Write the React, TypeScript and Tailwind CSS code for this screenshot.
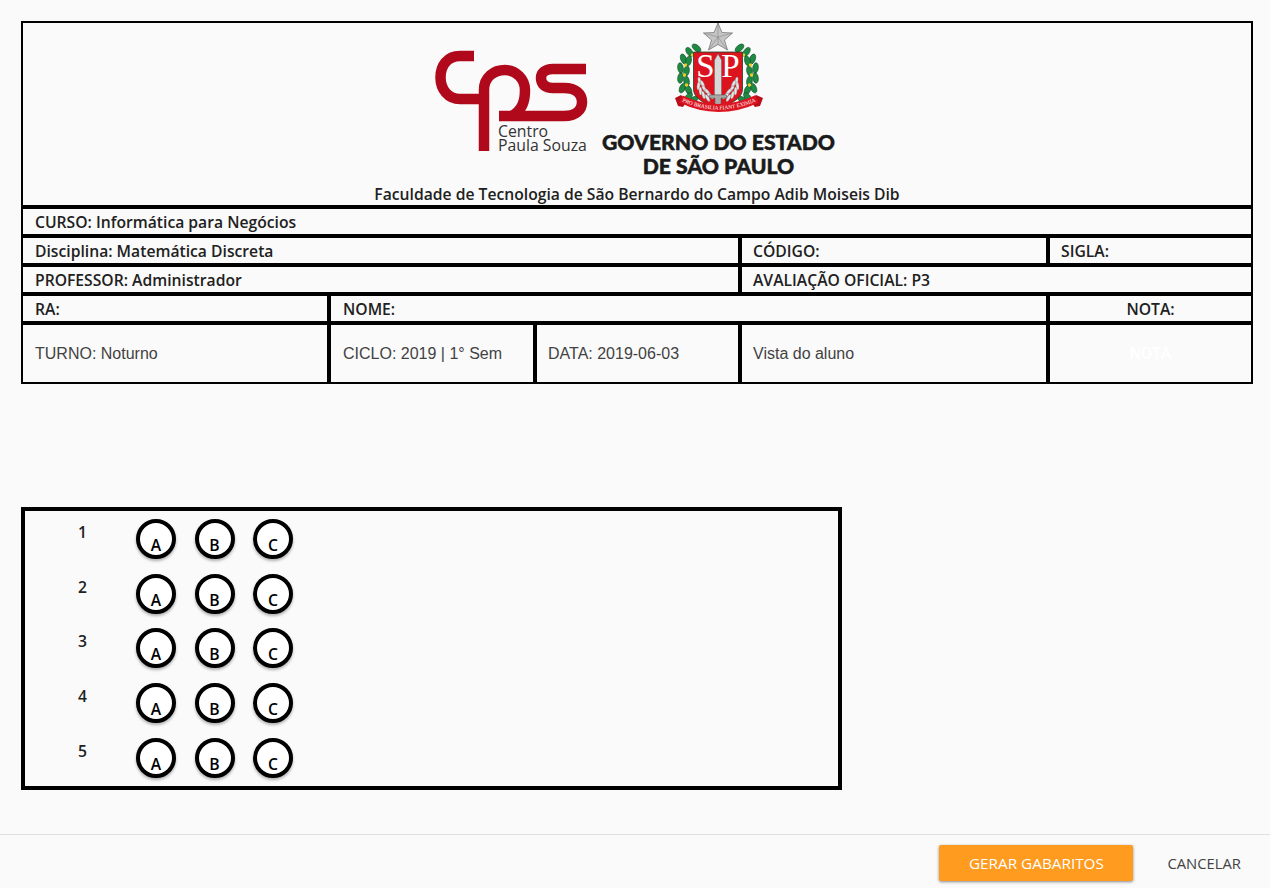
const FONT_BOLD = "font-['Open_Sans',sans-serif] font-semibold text-[15.7px] text-[#212121]";

function CpsLogo() {
  return (
    <svg width="156" height="104" viewBox="0 0 156 104" className="block">
      <g fill="none" stroke="#b0091c" strokeWidth="10.500">
        <path d="M40 6 H26 C13 6 6.500 16 6.500 27.500 C6.500 39 14 49 26 49 H46" />
        <path d="M50 101 V40 C50 27 60 20 71 20 C82 20 91 29 91 40 C91 52 88 60 78 66" />
        <path d="M152 19 H119 C111 19 107 23 107 28 C107 34 111 38 119 38 H130 C142 38 148 44 148 52 C148 60 142 66 130 66 H65" />
      </g>
    </svg>
  );
}

// folhas da coroa: x, y, rotacao
const LEAVES: [number, number, number][] = [
  [21, 25, -50],
  [14, 29, -35],
  [8, 36, -20],
  [13, 38, 15],
  [5, 45, -8],
  [11, 48, 10],
  [5, 55, 8],
  [11, 58, -10],
  [7, 65, 25],
  [13, 67, -25],
  [13, 74, 40],
  [18, 77, 55],
];

const FRUITS: [number, number][] = [
  [17, 32],
  [10, 42],
  [9, 52],
  [11, 62],
];

const SPRAY: [number, number, number][] = [
  [24, 58, -10],
  [27, 61, -25],
  [23, 63, 5],
  [29, 66, -35],
  [25, 68, -5],
  [32, 69, -40],
  [28, 72, -15],
  [35, 73, -50],
  [32, 75, -30],
];

function Crest() {
  return (
    <svg width="88" height="90" viewBox="0 0 88 90" className="block">
      <defs>
        <path id="lema" d="M6 78 Q 43 95 82 78" />
      </defs>
      <g transform="translate(0.500 0)">
        {[0, 1].map((side) => (
          <g key={side} transform={side ? "translate(85 0) scale(-1 1)" : undefined}>
            {LEAVES.map(([x, y, r], i) => (
              <ellipse key={i} cx={x} cy={y} rx="2.800" ry="5.200" transform={`rotate(${r} ${x} ${y})`} fill="#1f8a43" stroke="#0f4a26" strokeWidth="0.600" />
            ))}
            {FRUITS.map(([x, y], i) => (
              <circle key={i} cx={x} cy={y} r="1.700" fill="#f0c92c" />
            ))}
          </g>
        ))}
        <path d="M42.500 0 L46.500 9.500 L57 10 L49 17 L52 27 L42.500 21.500 L33 27 L36 17 L28 10 L38.500 9.500 Z" fill="#c4c4c4" stroke="#6b6b6b" strokeWidth="0.700" />
        <path d="M42.500 0 V21.500 M28 10 L42.500 14 L57 10 M33 27 L42.500 14 L52 27" fill="none" stroke="#7d7d7d" strokeWidth="0.500" />
        <path d="M18 29 H67 V66 C67 77 52 81 42.500 88 C33 81 18 77 18 66 Z" fill="#dc1420" stroke="#0f4a26" strokeWidth="0.800" />
        <text x="30" y="54" textAnchor="middle" fontFamily="Liberation Serif, serif" fontSize="33" fill="#fff">S</text>
        <text x="55" y="54" textAnchor="middle" fontFamily="Liberation Serif, serif" fontSize="33" fill="#fff">P</text>
        {[0, 1].map((side) => (
          <g key={side} transform={side ? "translate(85 0) scale(-1 1)" : undefined}>
            {SPRAY.map(([x, y, r], i) => (
              <ellipse key={i} cx={x} cy={y} rx="1.500" ry="4" transform={`rotate(${r} ${x} ${y})`} fill="#e6e6e6" stroke="#777" strokeWidth="0.400" />
            ))}
          </g>
        ))}
        <path d="M42.500 31 L46 37 V72 H39 V37 Z" fill="#d9d9d9" stroke="#666" strokeWidth="0.500" />
        <path d="M34 72 H51 V75 H45.500 V83 H39.500 V75 H34 Z" fill="#a8a8a8" stroke="#555" strokeWidth="0.500" />
      </g>
      <path d="M0 75 L6 72 L12 78 L8 84 L3 83 Z M88 75 L81 72 L75 78 L80 84 L85 83 Z" fill="#b80f1a" />
      <path d="M6 76 Q 43 94 82 76" fill="none" stroke="#dc1420" strokeWidth="8" />
      <text fontFamily="Liberation Serif, serif" fontSize="5.500" fill="#fff" textAnchor="middle">
        <textPath href="#lema" startOffset="50%">PRO BRASILIA FIANT EXIMIA</textPath>
      </text>
    </svg>
  );
}

function Cell({ className = "pl-[11px]", children }: { className?: string; children: React.ReactNode }) {
  return (
    <div className={`flex h-[25px] items-center pt-[2px] ${FONT_BOLD} ${className}`}>{children}</div>
  );
}

function LightCell({ className = "", children }: { className?: string; children: React.ReactNode }) {
  return (
    <div className={`flex items-center font-['Liberation_Sans',sans-serif] text-[16px] text-[#424242] ${className}`}>
      {children}
    </div>
  );
}

function QuestionRow({ n }: { n: number }) {
  return (
    <div className="flex h-[54.700px] items-start">
      <span className="mt-[10px] w-[111px] pl-[53px] font-['Open_Sans',sans-serif] text-[15.7px] font-semibold text-[#212121]">{n}</span>
      <div className="mt-[8px] flex gap-[18.500px]">
        {["A", "B", "C"].map((letter) => (
          <div
            key={letter}
            className="flex h-[40px] w-[40px] items-end justify-center rounded-full border-4 border-black bg-white font-['Open_Sans',sans-serif] text-[15.7px] font-semibold leading-[20px] text-black shadow-[0_2px_3px_rgba(0,0,0,0.3)]"
          >
            {letter}
          </div>
        ))}
      </div>
    </div>
  );
}

export default function App() {
  return (
    <div className="flex h-[888px] w-[1270px] flex-col bg-[#fafafa]">
      <div className="flex-1 pl-[21px] pt-[21px]">
        {/* Cabecalho */}
        <div className="w-[1232px] border-2 border-black">
          <div className="flex h-[182px] flex-col items-center">
            <div className="flex h-[158px] w-full shrink-0 items-start">
              <div className="ml-[411px] mt-[27px]">
                <div className="relative h-[104px] w-[156px]">
                  <CpsLogo />
                  <div className="absolute left-[64px] top-[74px] whitespace-nowrap font-['Open_Sans',sans-serif] text-[15.8px] leading-[14px] text-[#333]">
                    Centro
                    <br />
                    Paula Souza
                  </div>
                </div>
              </div>
              <div className="ml-[12px] flex flex-col items-center">
                <Crest />
                <div className="mt-[18px] text-center font-['Lato',sans-serif] text-[21.200px] font-black leading-[23.500px] text-[#1a1a1a] [-webkit-text-stroke:0.5px_#1a1a1a]">
                  GOVERNO DO ESTADO
                  <br />
                  DE SÃO PAULO
                </div>
              </div>
            </div>
            <div className={`mt-[2px] leading-[22px] ${FONT_BOLD}`}>Faculdade de Tecnologia de São Bernardo do Campo Adib Moiseis Dib</div>
          </div>

          <div className="border-t-4 border-black">
            <Cell className="pl-[12px]">CURSO: Informática para Negócios</Cell>
          </div>
          <div className="flex border-t-4 border-black">
            <Cell className="w-[719px] border-r-4 border-black pl-[12px]">Disciplina: Matemática Discreta</Cell>
            <Cell className="w-[308px] border-r-4 border-black pl-[11px]">CÓDIGO:</Cell>
            <Cell className="flex-1 pl-[11px]">SIGLA:</Cell>
          </div>
          <div className="flex border-t-4 border-black">
            <Cell className="w-[719px] border-r-4 border-black pl-[12px]">PROFESSOR: Administrador</Cell>
            <Cell className="flex-1 pl-[11px]">AVALIAÇÃO OFICIAL: P3</Cell>
          </div>
          <div className="flex border-t-4 border-black">
            <Cell className="w-[308px] border-r-4 border-black pl-[12px]">RA:</Cell>
            <Cell className="w-[719px] border-r-4 border-black pl-[12px]">NOME:</Cell>
            <Cell className="flex-1 justify-center">NOTA:</Cell>
          </div>
          <div className="flex h-[61px] border-t-4 border-black">
            <LightCell className="w-[308px] border-r-4 border-black pl-[12px]">TURNO: Noturno</LightCell>
            <LightCell className="w-[206px] border-r-4 border-black pl-[12px]">CICLO: 2019 | 1° Sem</LightCell>
            <LightCell className="w-[205px] border-r-4 border-black pl-[11px]">DATA: 2019-06-03</LightCell>
            <LightCell className="w-[308px] border-r-4 border-black pl-[11px]">Vista do aluno</LightCell>
            <div className="flex flex-1 items-center justify-center font-['Roboto',sans-serif] text-[16px] font-medium text-white">NOTA</div>
          </div>
        </div>

        {/* Questoes */}
        <div className="mt-[123px] h-[283px] w-[821px] border-4 border-black">
          {[1, 2, 3, 4, 5].map((n) => (
            <QuestionRow key={n} n={n} />
          ))}
        </div>
      </div>

      {/* Acoes */}
      <div className="flex h-[54px] items-center justify-end border-t border-[#e0e0e0] pr-[29px] pt-[2px]">
        <button className="h-[36px] w-[194px] rounded-[2px] bg-[#ff9b1f] pt-[1px] font-['Open_Sans',sans-serif] text-[15.300px] text-white shadow-[0_1px_3px_rgba(0,0,0,0.45)]">
          GERAR GABARITOS
        </button>
        <button className="ml-[34px] pt-[1px] font-['Open_Sans',sans-serif] text-[14.800px] text-[#424242]">CANCELAR</button>
      </div>
    </div>
  );
}
